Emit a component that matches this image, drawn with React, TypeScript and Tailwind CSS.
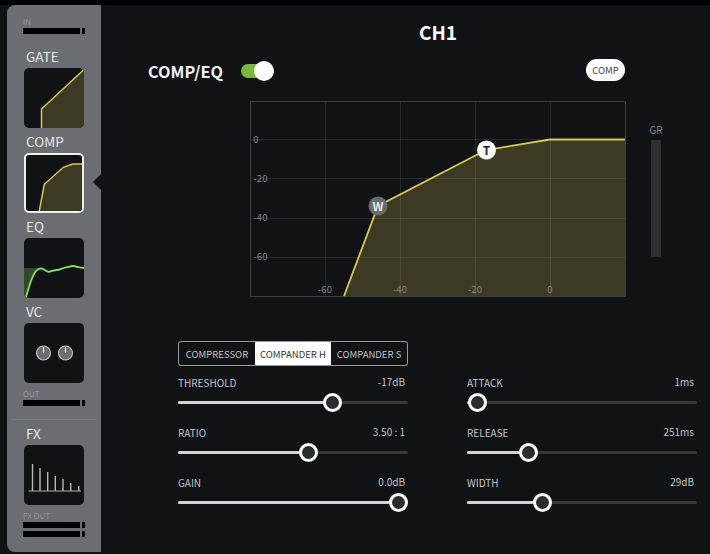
const FONT = "font-['Noto_Sans_CJK_JP','Noto_Sans',sans-serif]";

function Meter() {
  return (
    <div className="flex h-[6px] gap-[2px]">
      <div className="w-[57px] bg-black" />
      <div className="w-[3px] bg-black" />
    </div>
  );
}

function Thumb({ label, active, children }: { label: string; active?: boolean; children: React.ReactNode }) {
  return (
    <div className="ml-[1px] flex flex-col">
      <div className="h-[23px] pl-[2px] text-[13.5px] leading-[22px] text-[#e8e8e8]">{label}</div>
      <div className={`h-[60px] w-[60px] overflow-hidden rounded-[5px] bg-[#101216] ${active ? 'border-2 border-[#eeeeee]' : ''}`}>
        {children}
      </div>
    </div>
  );
}

function Sidebar() {
  return (
    <aside className="relative ml-[7px] flex h-[547px] w-[94px] flex-col rounded-tl-[8px] rounded-bl-[8px] bg-[#6a6d72] pl-[16px]">
      <div className="mt-[11px] h-[12px] text-[8px] leading-[12px] text-[#94979b]">IN</div>
      <Meter />
      <div className="mt-[11px] flex flex-col gap-[2px]">
        <Thumb label="GATE">
          <svg width="60" height="60" viewBox="0 0 60 60">
            <path d="M17.500 60 V41 L60 1.500 V60 Z" fill="#3d3a24" />
            <path d="M17.500 60 V41 L60 1.500" fill="none" stroke="#d8c858" strokeWidth="1.500" />
          </svg>
        </Thumb>
        <Thumb label="COMP" active>
          <svg width="56" height="56" viewBox="0 0 56 56">
            <path d="M13.300 56 L18.300 29.300 L37.300 12.300 L46.700 9 H56 V56 Z" fill="#3d3a24" />
            <path d="M13.300 56 L18.300 29.300 L37.300 12.300 L46.700 9 H56" fill="none" stroke="#d8c858" strokeWidth="1.500" />
          </svg>
        </Thumb>
        <Thumb label="EQ">
          <svg width="60" height="60" viewBox="0 0 60 60">
            <path d="M0 30 H14 C9 33 6 44 2 59 L0 60 Z" fill="#33492a" />
            <path
              d="M2 59 C5 49 7 41 10 36 C12 32 14 30.500 17 30.300 C20 30.300 22 33.500 24.500 33.800 C27 33.800 30 32 33 32 C36 32 38 30 41 29.700 C44 29.400 46 28 49 28 C52 28 55 29.800 60 30"
              fill="none"
              stroke="#86e05a"
              strokeWidth="1.800"
            />
          </svg>
        </Thumb>
        <Thumb label="VC">
          <svg width="60" height="60" viewBox="0 0 60 60">
            <circle cx="19.500" cy="30" r="7" fill="#6a6d72" stroke="#c4c4c4" strokeWidth="1.200" />
            <line x1="19.500" y1="24" x2="19.500" y2="30" stroke="#e8e8e8" strokeWidth="1.200" />
            <circle cx="41.500" cy="30" r="7" fill="#6a6d72" stroke="#c4c4c4" strokeWidth="1.200" />
            <line x1="41.500" y1="24" x2="41.500" y2="30" stroke="#e8e8e8" strokeWidth="1.200" />
          </svg>
        </Thumb>
      </div>
      <div className="mt-[5px] h-[12px] text-[8px] leading-[12px] text-[#94979b]">OUT</div>
      <Meter />
      <div className="-ml-[12px] mt-[13px] h-px w-[85px] bg-[#76797e]" />
      <div className="mt-[2px]">
        <Thumb label="FX">
          <svg width="60" height="60" viewBox="0 0 60 60">
            <path d="M4.500 46 H57" stroke="#a8a8a8" strokeWidth="1" />
            <path
              d="M8.500 46 V19 M16 46 V23 M23.700 46 V27 M31.300 46 V31 M39 46 V34 M46.700 46 V38 M54.700 46 V41"
              stroke="#b8b8b8"
              strokeWidth="1.400"
            />
          </svg>
        </Thumb>
      </div>
      <div className="mt-[5px] h-[12px] text-[8px] leading-[12px] text-[#94979b]">FX OUT</div>
      <div className="flex flex-col gap-[3px]">
        <Meter />
        <Meter />
      </div>
      {/* caret pointing at the selected module */}
      <div className="absolute right-0 top-[169px] h-0 w-0 border-y-[8px] border-r-[8px] border-y-transparent border-r-[#101216]" />
    </aside>
  );
}

function Graph() {
  const xs = [75, 150, 225, 300];
  const ys = [38, 77, 117, 156];
  const curve = 'M94 195 L128 105 L236 49 L300 38.500 H375';
  return (
    <div className="h-[196px] w-[376px] shrink-0">
      <svg width="376" height="196" viewBox="0 0 376 196" className="block">
        <path d={`${curve} V195 H94 Z`} fill="#3d3a24" />
        {xs.map((x) => (
          <line key={x} x1={x + 0.5} y1="0" x2={x + 0.5} y2="196" stroke="#ffffff" strokeOpacity="0.09" />
        ))}
        {ys.map((y) => (
          <line key={y} x1="0" y1={y + 0.5} x2="376" y2={y + 0.5} stroke="#ffffff" strokeOpacity="0.09" />
        ))}
        <rect x="0.500" y="0.500" width="375" height="195" fill="none" stroke="#3a3c40" />
        <path d={curve} fill="none" stroke="#d8c858" strokeWidth="1.800" />
        <g fontSize="9.500" fill="#85878a" textAnchor="middle">
          <text x="6" y="41.500">0</text>
          <text x="10.500" y="80.500">-20</text>
          <text x="10.500" y="119.500">-40</text>
          <text x="10.500" y="158.500">-60</text>
          <text x="75" y="192">-60</text>
          <text x="150" y="192">-40</text>
          <text x="225" y="192">-20</text>
          <text x="300" y="192">0</text>
        </g>
        <circle cx="128" cy="105" r="9.500" fill="#6a6b6e" />
        <text x="128" y="109.500" fontSize="12" fontWeight="700" fill="#e8e8e8" textAnchor="middle">W</text>
        <circle cx="236.500" cy="49" r="9.500" fill="#ffffff" />
        <text x="236.500" y="53.500" fontSize="12" fontWeight="700" fill="#1d2024" textAnchor="middle">T</text>
      </svg>
    </div>
  );
}

function Slider({ label, value, pos }: { label: string; value: string; pos: number }) {
  return (
    <div className="h-[50px] w-[230px]">
      <div className="flex h-[16px] items-center justify-between pr-[3px] text-[10px] text-[#c4c4c4]">
        <span>{label}</span>
        <span className="mb-[1px]">{value}</span>
      </div>
      <div className="relative mt-[11px] h-[3px] rounded-full bg-[#35373a]">
        <div className="h-full rounded-full bg-[#d4d4d4]" style={{ width: pos }} />
        <div
          className="absolute top-[-8px] h-[19px] w-[19px] rounded-full border-[3px] border-white bg-[#2a2d30]"
          style={{ left: pos - 9 }}
        />
      </div>
    </div>
  );
}

export default function App() {
  return (
    <div className={`flex h-[554px] w-[710px] flex-col overflow-hidden bg-[#101216] ${FONT}`}>
      <div className="h-[5px] bg-black" />
      <div className="flex flex-1">
        <Sidebar />
        <main className="flex flex-1 flex-col">
          <h1 className="mt-[15px] h-[24px] pl-[65px] text-center text-[19px] font-bold leading-[24px] text-white">CH1</h1>
          <div className="mt-[15px] flex h-[22px] w-[524px] items-center pl-[47px]">
            <span className="mt-[2px] w-[93px] text-[16.250px] font-bold text-[#f2f2f2]">COMP/EQ</span>
            <span className="relative mt-[2px] h-[14px] w-[28px] rounded-full bg-[#78b83c]">
              <span className="absolute left-[13px] top-[-3px] h-[20px] w-[20px] rounded-full bg-white" />
            </span>
            <span className="ml-auto flex h-[22px] w-[39px] items-center justify-center rounded-full bg-white text-[9.500px] text-[#444444]">
              COMP
            </span>
          </div>
          <div className="mt-[20px] flex pl-[149px]">
            <Graph />
            <div className="ml-[24px] flex w-[12px] flex-col items-center">
              <div className="mt-[23px] h-[16px] text-[10px] leading-[12px] text-[#85878a]">GR</div>
              <div className="h-[117px] w-[10px] bg-[#2e2e2e]" />
            </div>
          </div>
          <div className="ml-[77px] mt-[44px] flex h-[25px] w-[230px] overflow-hidden rounded-[3px] border border-[#9a9a9a] text-[9.500px] leading-[24px] text-[#c4c4c4]">
            <div className="w-[76px] text-center">COMPRESSOR</div>
            <div className="w-[76px] bg-white text-center text-[#333333]">COMPANDER H</div>
            <div className="flex-1 text-center">COMPANDER S</div>
          </div>
          <div className="ml-[77px] mt-[8px] grid w-[519px] grid-cols-[230px_230px] gap-x-[59px]">
            <Slider label="THRESHOLD" value="-17dB" pos={154} />
            <Slider label="ATTACK" value="1ms" pos={10} />
            <Slider label="RATIO" value="3.50 : 1" pos={130} />
            <Slider label="RELEASE" value="251ms" pos={60.5} />
            <Slider label="GAIN" value="0.0dB" pos={220} />
            <Slider label="WIDTH" value="29dB" pos={75} />
          </div>
        </main>
      </div>
    </div>
  );
}
